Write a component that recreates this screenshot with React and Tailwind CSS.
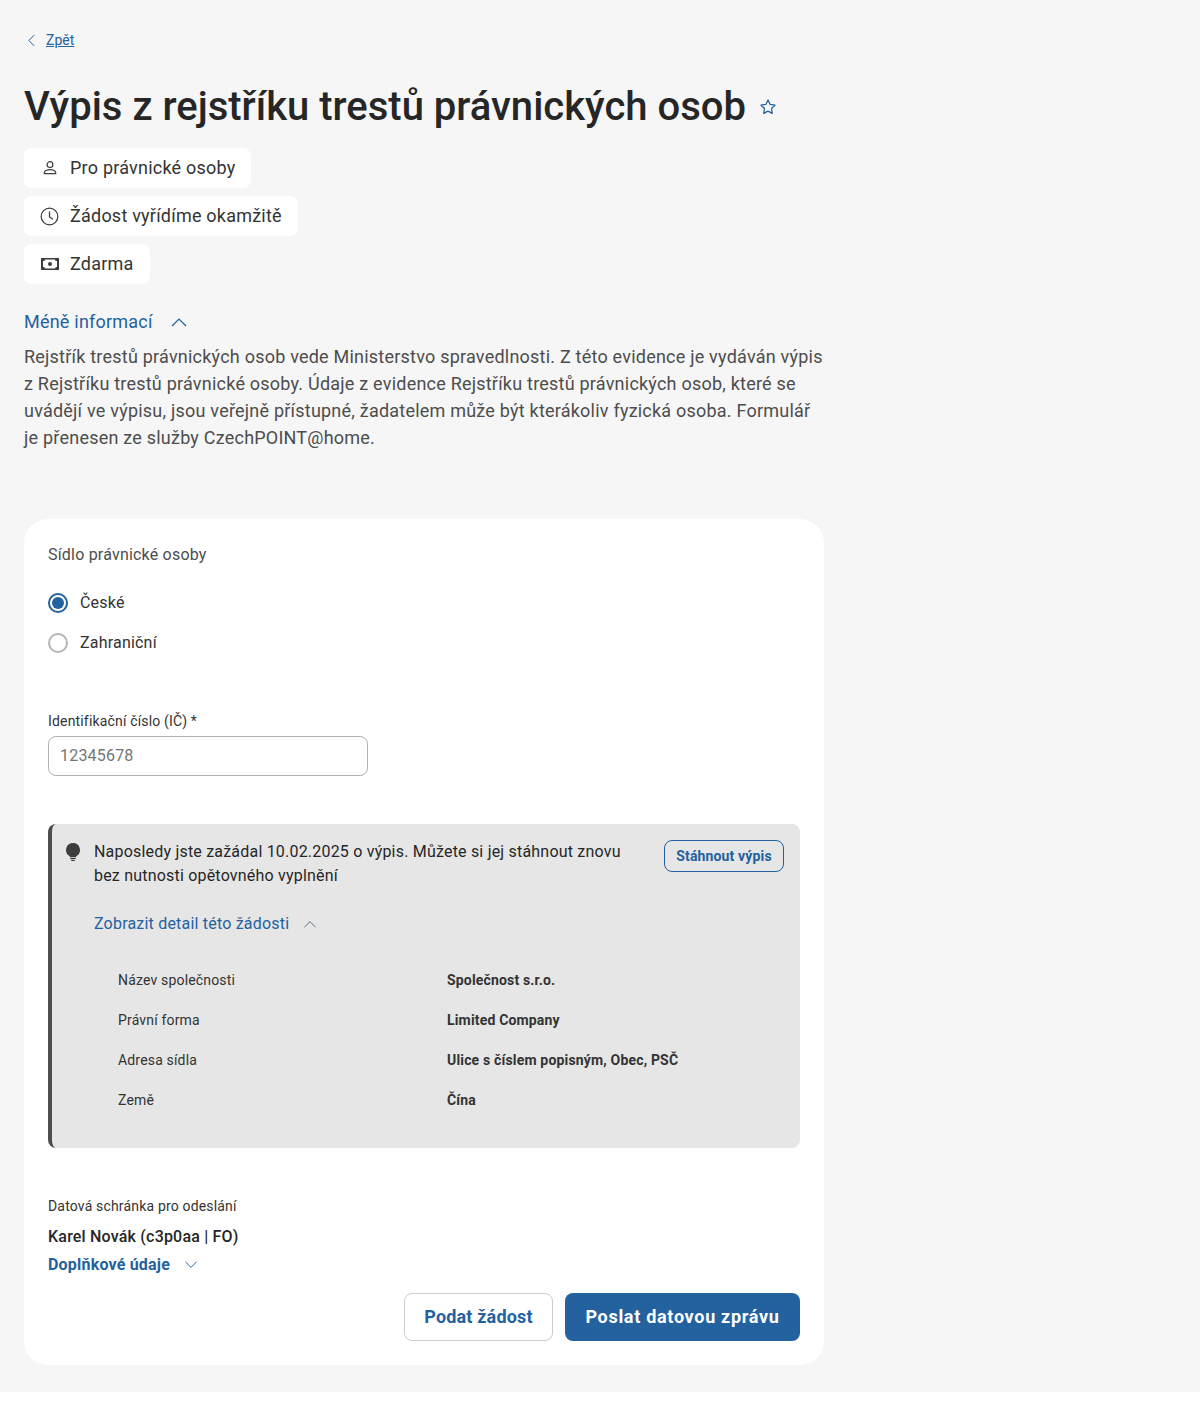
import React from 'react'

const Chevron = ({ up, className }) => (
  <svg viewBox="0 0 16 10" fill="none" stroke="currentColor" strokeWidth="1.2" className={className}>
    <path d={up ? 'M1 9l7-7 7 7' : 'M1 1l7 7 7-7'} />
  </svg>
)

const Chip = ({ icon, children }) => (
  <div className="inline-flex h-10 items-center self-start rounded-lg bg-white pl-4 pr-4 text-lg tracking-[0.22px] text-[#333333]">
    <span className="mr-[11px] flex w-[19px] justify-center">{icon}</span>
    {children}
  </div>
)

const DetailRow = ({ label, value }) => (
  <div className="flex h-10 items-center text-sm tracking-[0.17px] text-[#333333]">
    <span className="w-[329px]">{label}</span>
    <span className="font-bold">{value}</span>
  </div>
)

const App = () => {
  return (
    <div className="min-h-[1413px] bg-white font-['Roboto',sans-serif]">
      <div className="h-[1392px] bg-[#f6f6f6] px-6 pt-[30px]">
        <div className="flex h-5 items-center text-sm text-[#23619f]">
          <svg viewBox="0 0 10 14" fill="none" stroke="currentColor" strokeWidth="1.1" className="ml-[3px] h-[13px] w-[9px]">
            <path d="M8 1L2 7l6 6" />
          </svg>
          <a className="ml-[10px] underline">Zpět</a>
        </div>

        <div className="mt-[33px] flex h-[48px] items-center">
          <h1 className="text-[40px] font-medium leading-[48px] text-[#262626]">Výpis z rejstříku trestů právnických osob</h1>
          <svg viewBox="0 0 24 24" fill="none" stroke="#23619f" strokeWidth="1.5" strokeLinejoin="round" className="ml-[12px] h-[20px] w-[20px]">
            <path d="M12 3.5l2.6 5.4 5.9.8-4.3 4.1 1 5.9-5.2-2.8-5.2 2.8 1-5.9-4.3-4.1 5.9-.8z" />
          </svg>
        </div>

        <div className="mt-[17px] flex flex-col gap-2">
          <Chip icon={
            <svg viewBox="0 0 16 16" fill="none" stroke="#3d3d3d" strokeWidth="1.2" className="h-4 w-4">
              <circle cx="8" cy="4.6" r="2.9" />
              <path d="M2.3 13.6v-1.2c0-1.4 2.6-2.7 5.7-2.7s5.7 1.3 5.7 2.7v1.2z" />
            </svg>
          }>Pro právnické osoby</Chip>
          <Chip icon={
            <svg viewBox="0 0 20 20" fill="none" stroke="#3d3d3d" strokeWidth="1.3" className="h-[19px] w-[19px]">
              <circle cx="10" cy="10" r="8.8" />
              <path d="M10 4.8V10.4l3.6 2.6" />
            </svg>
          }>Žádost vyřídíme okamžitě</Chip>
          <Chip icon={
            <svg viewBox="0 0 18 12" className="h-[12px] w-[18px]" fill="#3d3d3d">
              <path fillRule="evenodd" d="M0 0h18v12H0zM4 1.5c0 1-.8 1.6-2 1.6v5.8c1.2 0 2 .6 2 1.6h10c0-1 .8-1.6 2-1.6V3.100c-1.200 0-2-.6-2-1.600z" />
              <circle cx="9" cy="6" r="2" />
            </svg>
          }>Zdarma</Chip>
        </div>

        <div className="mt-[24px] flex h-[28px] items-center text-lg tracking-[0.22px] text-[#23619f]">
          Méně informací
          <Chevron up className="ml-[18px] h-[10px] w-[16px]" />
        </div>
        <p className="mt-[7px] w-[800px] text-lg leading-[27px] tracking-[0.22px] text-[#4d4d4d]">
          Rejstřík trestů právnických osob vede Ministerstvo spravedlnosti. Z této evidence je vydáván výpis z Rejstříku trestů právnické osoby. Údaje z evidence Rejstříku trestů právnických osob, které se uvádějí ve výpisu, jsou veřejně přístupné, žadatelem může být kterákoliv fyzická osoba. Formulář je přenesen ze služby CzechPOINT@home.
        </p>

        <div className="mt-[68px] h-[846px] w-[800px] rounded-3xl bg-white p-6">
          <div className="text-base leading-[24px] tracking-[0.2px] text-[#4d4d4d]">Sídlo právnické osoby</div>

          <div className="mt-[24px] flex h-[24px] items-center text-base tracking-[0.2px] text-[#333333]">
            <span className="flex h-5 w-5 items-center justify-center rounded-full border-2 border-[#23619f]">
              <span className="h-3 w-3 rounded-full bg-[#23619f]"></span>
            </span>
            <span className="ml-3">České</span>
          </div>
          <div className="mt-[16px] flex h-[24px] items-center text-base tracking-[0.2px] text-[#333333]">
            <span className="h-5 w-5 rounded-full border-2 border-[#b5b5b5]"></span>
            <span className="ml-3">Zahraniční</span>
          </div>

          <label className="mt-[56px] block text-sm leading-[20px] tracking-[0.17px] text-[#333333]">Identifikační číslo (IČ) *</label>
          <div className="mt-[5px] flex h-10 w-[320px] items-center rounded-lg border border-[#b0b0b0] px-[11px] text-base tracking-[0.2px] text-[#757575]">12345678</div>

          <div className="mt-[48px] flex h-[324px] w-[752px] rounded-lg border-l-4 border-[#4d4d4d] bg-[#e6e6e6] pl-[14px] pr-4 pt-4">
            <svg viewBox="0 0 14 18" className="mt-[3px] h-[18px] w-[14px] shrink-0" fill="#3d3d3d">
              <path d="M7 0a7 7 0 00-3.7 12.900c.5.3.7.8.7 1.300h6c0-.5.2-1 .7-1.300A7 7 0 007 0z" />
              <path d="M4.200 15h5.600v1.100H4.200zM5.200 16.800h3.600V18H5.200z" />
            </svg>
            <div className="ml-[14px] flex-1">
              <div className="flex">
                <p className="w-[546px] text-base leading-[24px] tracking-[0.2px] text-[#262626]">
                  Naposledy jste zažádal 10.02.2025 o výpis. Můžete si jej stáhnout znovu bez nutnosti opětovného vyplnění
                </p>
                <button className="ml-auto h-8 w-[120px] rounded-lg border border-[#23619f] text-sm font-bold tracking-[0.15px] text-[#23619f]">Stáhnout výpis</button>
              </div>
              <div className="mt-[24px] flex h-[24px] items-center text-base tracking-[0.2px] text-[#23619f]">
                Zobrazit detail této žádosti
                <Chevron up className="ml-[14px] h-[8px] w-[14px] text-[#4d6d8d]" />
              </div>
              <div className="mt-[24px] pl-6">
                <DetailRow label="Název společnosti" value="Společnost s.r.o." />
                <DetailRow label="Právní forma" value="Limited Company" />
                <DetailRow label="Adresa sídla" value="Ulice s číslem popisným, Obec, PSČ" />
                <DetailRow label="Země" value="Čína" />
              </div>
            </div>
          </div>

          <div className="mt-[48px] text-sm leading-[20px] tracking-[0.17px] text-[#333333]">Datová schránka pro odeslání</div>
          <div className="mt-[9px] text-base font-medium leading-[24px] tracking-[0.2px] text-[#262626]">Karel Novák (c3p0aa | FO)</div>
          <div className="mt-[4px] flex h-[24px] items-center text-base font-bold tracking-[0.2px] text-[#23619f]">
            Doplňkové údaje
            <Chevron className="ml-[14px] h-[8px] w-[14px]" />
          </div>

          <div className="mt-[16px] flex w-[752px] justify-end gap-3">
            <button className="h-12 w-[149px] rounded-lg border border-[#cccccc] bg-white text-lg font-bold tracking-[0.17px] text-[#23619f]">Podat žádost</button>
            <button className="h-12 w-[235px] rounded-lg bg-[#23619f] text-lg font-bold tracking-[0.7px] text-white">Poslat datovou zprávu</button>
          </div>
        </div>
      </div>
    </div>
  )
}

export default App
